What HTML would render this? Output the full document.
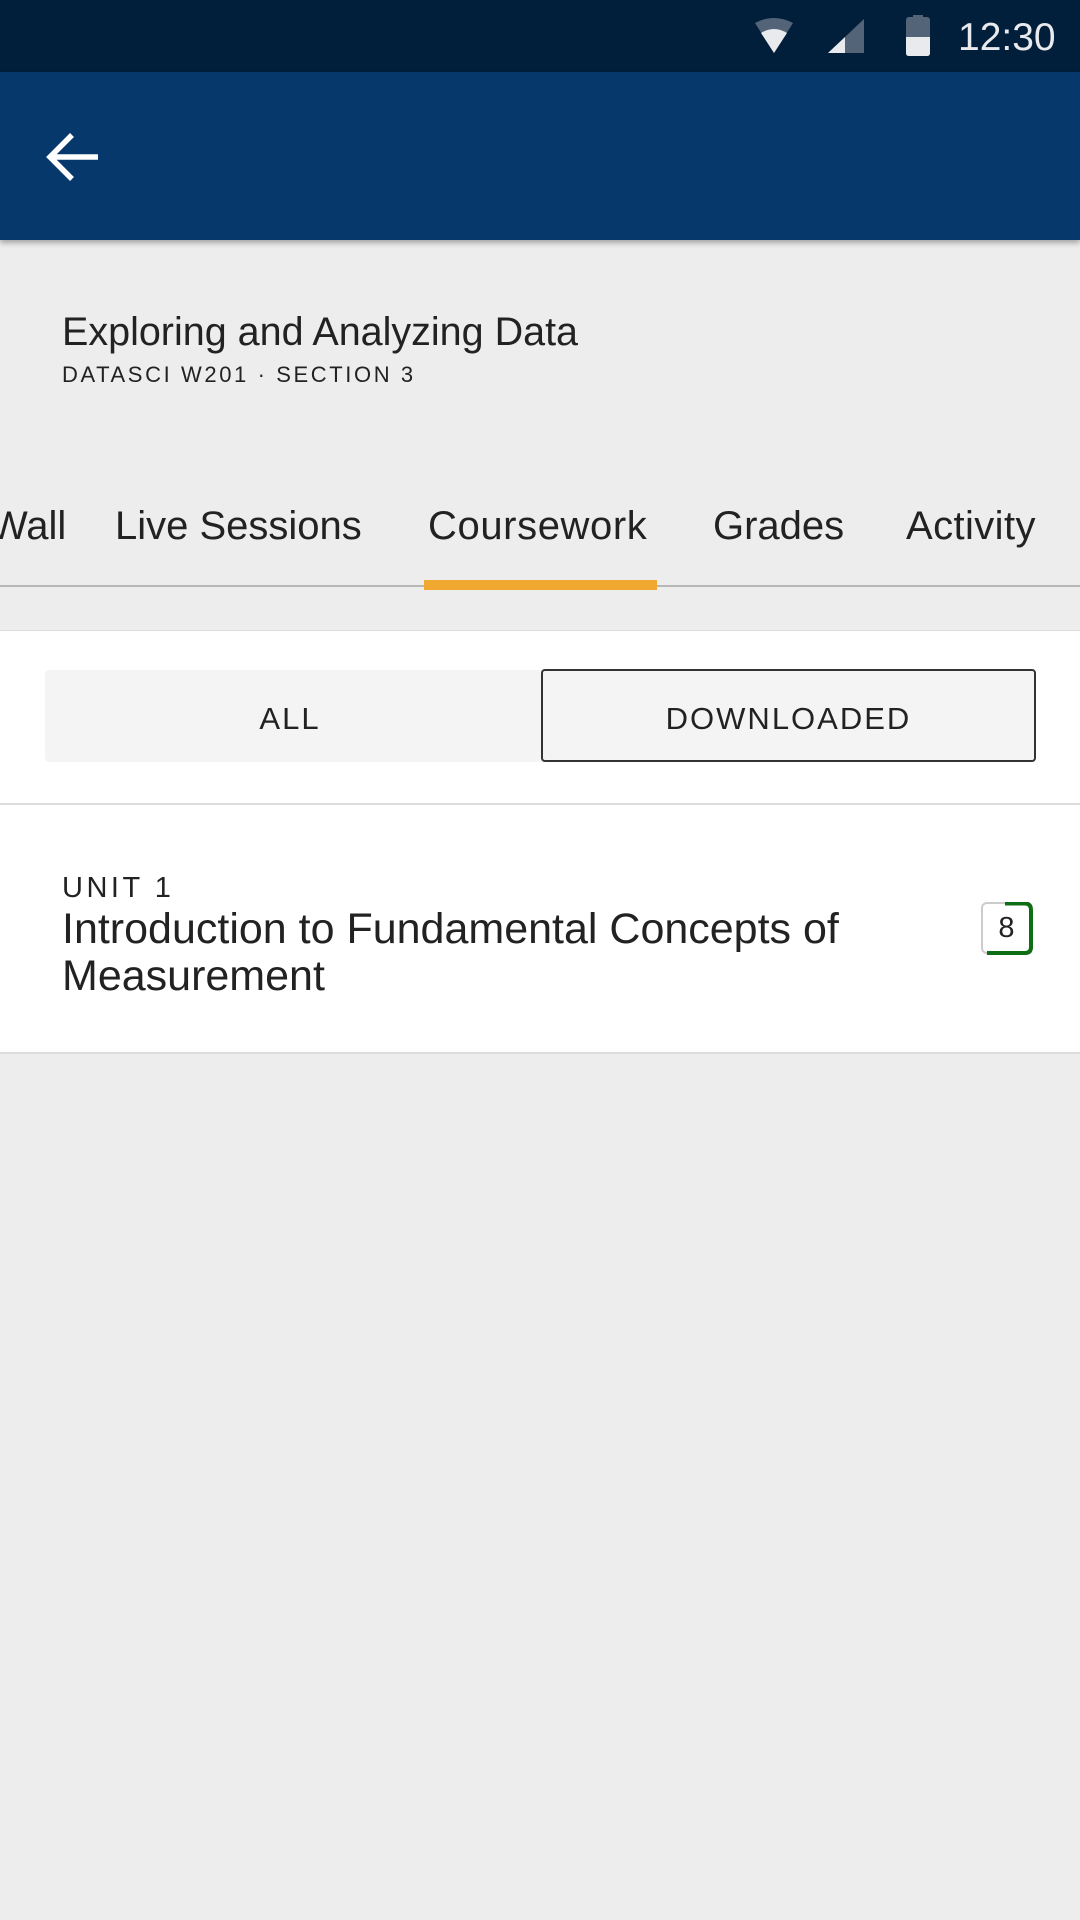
<!DOCTYPE html><html><head><style>
*{margin:0;padding:0;box-sizing:border-box}
body{width:1080px;height:1920px;background:#ededed;font-family:"Liberation Sans",sans-serif;color:#222;position:relative;overflow:hidden}
.a{position:absolute;white-space:nowrap}
</style></head><body>
<div class="a" style="left:0;top:0;width:1080px;height:72px;background:#011e3a"></div>
<svg class="a" style="left:750px;top:15px" width="200" height="45">
<path d="M5 8 Q24 -2 43 8 L24 38 Z" fill="#536479"/><path d="M11 18 Q24 10 37 18 L24 38 Z" fill="#e8eaed"/>
<path d="M78 38 L114 4 L114 38 Z" fill="#536479"/><path d="M78 38 L95 22 L95 38 Z" fill="#e8eaed"/>
<rect x="156" y="2" width="24" height="39" rx="3" fill="#536479"/><rect x="163" y="0" width="10" height="4" fill="#536479"/>
<path d="M156 22 H180 V38 Q180 41 177 41 H159 Q156 41 156 38 Z" fill="#e8eaed"/>
</svg>
<div class="a" style="left:958px;top:16px;font-size:39px;color:#e8eaed">12:30</div>
<div class="a" style="left:0;top:72px;width:1080px;height:168px;background:#06386b;box-shadow:0 3px 5px rgba(0,0,0,.3)"></div>
<svg class="a" style="left:46px;top:132px" width="56" height="50"><path d="M4 25 H52 M26 3 L4 25 L26 47" stroke="#fff" stroke-width="5.5" fill="none"/></svg>
<div class="a" style="left:62px;top:310px;font-size:39.5px;color:#222">Exploring and Analyzing Data</div>
<div class="a" style="left:62px;top:362px;font-size:22px;letter-spacing:2.6px">DATASCI W201 · SECTION 3</div>
<div class="a" style="left:-10px;top:504px;font-size:40px">Wall</div>
<div class="a" style="left:115px;top:504px;font-size:40px">Live Sessions</div>
<div class="a" style="left:428px;top:504px;font-size:40px;letter-spacing:0.6px">Coursework</div>
<div class="a" style="left:713px;top:504px;font-size:40px">Grades</div>
<div class="a" style="left:906px;top:504px;font-size:40px;letter-spacing:0.4px">Activity</div>
<div class="a" style="left:0;top:585px;width:1080px;height:2px;background:#b8b8b8"></div>
<div class="a" style="left:424px;top:580px;width:233px;height:10px;background:#f0a830"></div>
<div class="a" style="left:0;top:630px;width:1080px;height:424px;background:#fff;border-top:1px solid #ddd;border-bottom:2px solid #ddd"></div>
<div class="a" style="left:0;top:803px;width:1080px;height:2px;background:#ddd"></div>
<div class="a" style="left:45px;top:670px;width:991px;height:92px;background:#f4f4f4;border-radius:4px"></div>
<div class="a" style="left:541px;top:669px;width:495px;height:93px;border:2px solid #333;border-radius:4px"></div>
<div class="a" style="left:42px;top:701px;width:496px;text-align:center;font-size:31px;letter-spacing:2px">ALL</div>
<div class="a" style="left:541px;top:701px;width:495px;text-align:center;font-size:31px;letter-spacing:2px">DOWNLOADED</div>
<div class="a" style="left:62px;top:872px;font-size:29px;letter-spacing:3.5px">UNIT 1</div>
<div class="a" style="left:62px;top:906px;font-size:43px;line-height:47px">Introduction to Fundamental Concepts of<br>Measurement</div>
<div class="a" style="left:981px;top:902px;width:51px;height:52px;border:2px solid #ccc;border-radius:6px"></div>
<svg class="a" style="left:981px;top:902px" width="52" height="53"><path d="M24 1.5 H44 Q50 1.5 50 8 V45 Q50 51 44 51 H6" stroke="#0d6e13" stroke-width="4" fill="none"/></svg>
<div class="a" style="left:981px;top:912px;width:51px;text-align:center;font-size:29px">8</div>
</body></html>
